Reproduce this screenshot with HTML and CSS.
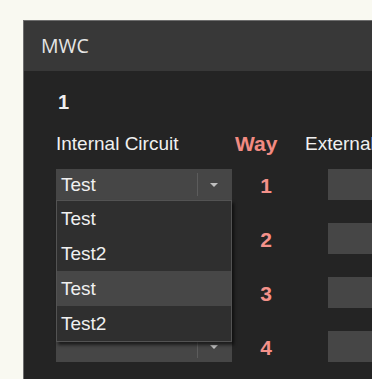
FILE: index.html
```html
<!DOCTYPE html>
<html>
<head>
<meta charset="utf-8">
<link rel="stylesheet" href="styles.css">
</head>
<body>
<div class="panel">
  <div class="panel-head">MWC</div>
  <div class="panel-body">
    <div class="title">1</div>
    <div class="grid">
      <div class="h h-int">Internal Circuit</div>
      <div class="h h-way">Way</div>
      <div class="h h-ext">External</div>

      <div class="cell"><div class="select"><span class="val">Test</span><span class="arrow"></span></div>
        <ul class="list">
          <li>Test</li>
          <li>Test2</li>
          <li class="hover">Test</li>
          <li>Test2</li>
        </ul>
      </div>
      <div class="num">1</div>
      <div class="box"></div>

      <div class="cell"><div class="select"><span class="val"></span><span class="arrow"></span></div></div>
      <div class="num">2</div>
      <div class="box"></div>

      <div class="cell"><div class="select"><span class="val"></span><span class="arrow"></span></div></div>
      <div class="num">3</div>
      <div class="box"></div>

      <div class="cell"><div class="select"><span class="val"></span><span class="arrow"></span></div></div>
      <div class="num">4</div>
      <div class="box"></div>
    </div>
  </div>
</div>
</body>
</html>
```

FILE: styles.css
```css
html, body {
  margin: 0;
  padding: 0;
  background: #f9f9f1;
  overflow: hidden;
}
body {
  width: 372px;
  height: 379px;
  font-family: "Liberation Sans", Arial, sans-serif;
}
.panel {
  margin: 20px 0 0 23px;
  width: 349px;
  height: 359px;
  overflow: hidden;
  border-top: 1px solid #6e6e6e;
  border-left: 1px solid #6e6e6e;
  background: #242424;
}
.panel-head {
  height: 50px;
  background: #383838;
  color: #e6e6e6;
  font-family: "Open Sans", "Noto Sans", sans-serif;
  font-size: 19.5px;
  line-height: 50px;
  padding-left: 17px;
}
.panel-body {
  padding: 20px 0 0 32px;
}
.title {
  color: #eeeeee;
  font-weight: bold;
  font-size: 20px;
  line-height: 22px;
  padding-left: 2px;
}
.grid {
  margin-top: 20px;
  display: grid;
  grid-template-columns: 176px 73px 100px;
  row-gap: 23px;
  color: #f0f0f0;
  font-size: 19px;
}
.h {
  line-height: 22px;
  margin-bottom: -9px;
  white-space: nowrap;
}
.h-way {
  color: #f28b82;
  font-weight: bold;
  font-size: 21px;
  padding-left: 3px;
}
.cell {
  position: relative;
}
.select {
  height: 31px;
  background: #464646;
  display: flex;
  align-items: center;
}
.val {
  flex: 1;
  padding-left: 5px;
  color: #f0f0f0;
}
.arrow {
  width: 34px;
  height: 23px;
  border-left: 1px solid #5c5c5c;
  position: relative;
}
.arrow::after {
  content: "";
  position: absolute;
  left: 12px;
  top: 10px;
  border-left: 4px solid transparent;
  border-right: 4px solid transparent;
  border-top: 4px solid #c0c0c0;
}
.num {
  color: #f4918a;
  font-weight: bold;
  font-size: 21px;
  text-align: center;
  padding-right: 5px;
  line-height: 31px;
  padding-top: 1px;
  box-sizing: border-box;
  height: 31px;
}
.box {
  margin-left: 23px;
  height: 31px;
  background: #464646;
}
.list {
  position: absolute;
  left: 0;
  top: 31px;
  width: 174px;
  margin: 0;
  padding: 0;
  list-style: none;
  background: #2f2f2f;
  border: 1px solid #535353;
  box-shadow: 2px 3px 3px rgba(0,0,0,0.6);
  z-index: 5;
}
.list li {
  height: 35px;
  line-height: 35px;
  padding-left: 4px;
  color: #f0f0f0;
}
.list li.hover {
  background: #474747;
}
```
